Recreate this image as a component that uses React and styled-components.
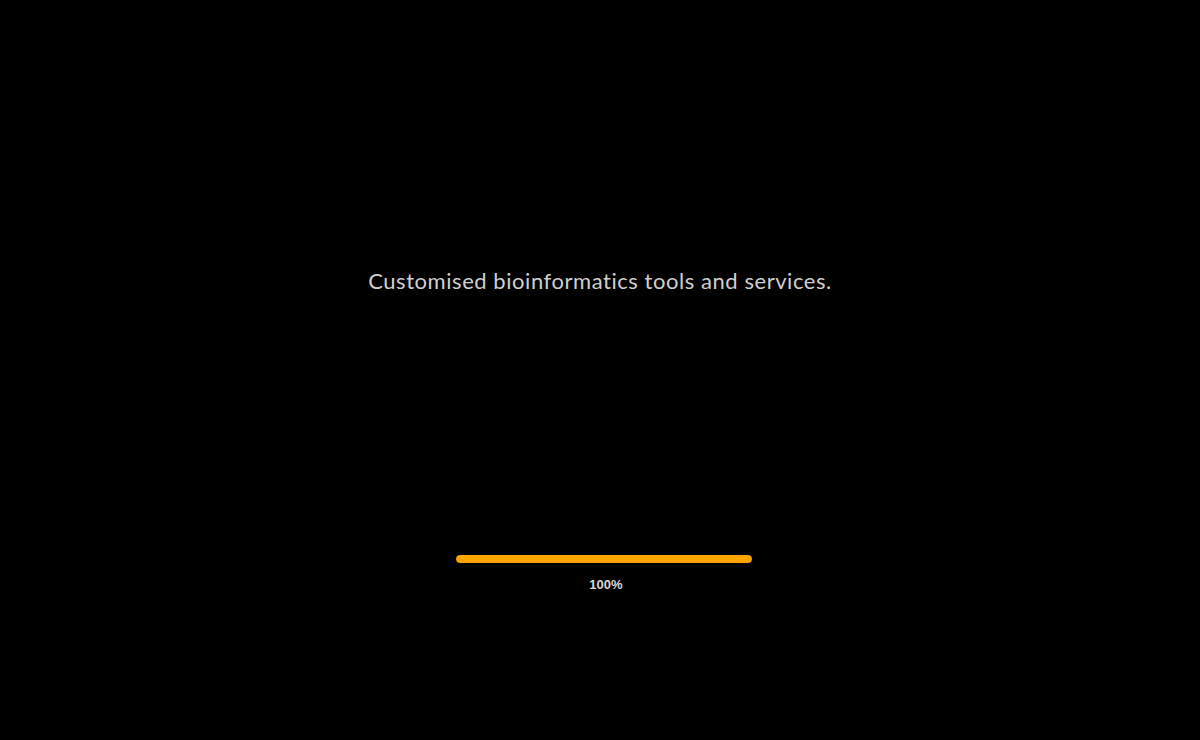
import styled, { createGlobalStyle } from "styled-components";

const Global = createGlobalStyle`
  html, body {
    margin: 0;
    padding: 0;
    background: #000;
  }
`;

const Screen = styled.div`
  height: 740px;
  background: #000;
  display: flex;
  flex-direction: column;
  align-items: center;
`;

const Tagline = styled.div`
  margin-top: 267px;
  font-family: Lato, "Open Sans", sans-serif;
  font-size: 22px;
  font-weight: 400;
  color: #cfcfcf;
  letter-spacing: 0.55px;
`;

const Loader = styled.div`
  margin-top: 261px;
  margin-left: 7px;
  display: flex;
  flex-direction: column;
  align-items: center;
`;

const Track = styled.div`
  width: 296px;
  height: 8px;
  border-radius: 4px;
  background: #1a1a1a;
  overflow: hidden;
`;

const Fill = styled.div`
  height: 100%;
  border-radius: 4px;
  background: #ffa500;
`;

const Percent = styled.div`
  margin-top: 14px;
  margin-left: 5px;
  font-family: "Liberation Sans", Arial, sans-serif;
  font-size: 13px;
  font-weight: 700;
  color: #d8d8d8;
`;

const App = () => {
  const progress = 100;
  return (
    <>
      <Global />
      <Screen>
        <Tagline>Customised bioinformatics tools and services.</Tagline>
        <Loader>
          <Track>
            <Fill style={{ width: `${progress}%` }} />
          </Track>
          <Percent>{progress}%</Percent>
        </Loader>
      </Screen>
    </>
  );
};

export default App;
